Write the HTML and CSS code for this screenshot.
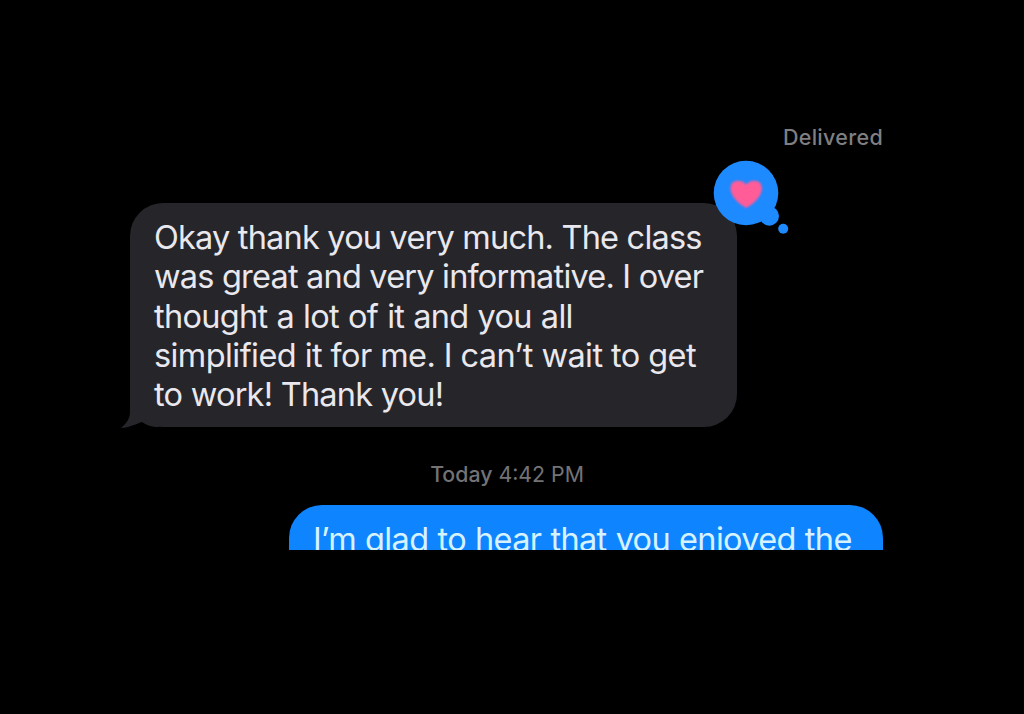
FILE: index.html
```
<!DOCTYPE html>
<html lang="en">
<head>
    <meta charset="UTF-8">
    <meta name="viewport" content="width=device-width, initial-scale=1.0">
    <title>Messages</title>
    <link rel="stylesheet" href="styles.css">
</head>
<body>
    <main class="chat">
        <div class="status">Delivered</div>

        <div class="bubble received">
            <svg class="tail" width="40" height="36" viewBox="0 0 40 36">
                <path d="M9 0V19C9 25 6 30 0 35C8 34.5 15 31 21 29C25 32 31 34 38 34V0Z" fill="#26252a"/>
            </svg>

            <p class="line line1">Okay thank you very much. The class</p>
            <p class="line line2">was great and very informative. I over</p>
            <p class="line line3">thought a lot of it and you all</p>
            <p class="line line4">simplified it for me. I can’t wait to get</p>
            <p class="line line5">to work! Thank you!</p>

            <svg class="reaction" width="78" height="78" viewBox="0 0 78 78">
                <g fill="#1d8aff">
                    <circle cx="34" cy="35" r="32.3"/>
                    <circle cx="57.3" cy="58" r="9.7"/>
                    <circle cx="71.2" cy="70.8" r="5"/>
                </g>
                <path class="heart" d="M34.2 50C27 46 18.5 38.5 18.5 30.5C18.5 25.5 21.5 22.8 26 22.8C29.5 22.8 32.5 24.3 34.2 26.5C35.9 24.3 38.9 22.8 42.4 22.8C46.9 22.8 49.9 25.5 49.9 30.5C49.9 38.5 41.4 46 34.2 50Z" fill="#ff5c98"/>
            </svg>
        </div>

        <div class="time"><b>Today</b> 4:42 PM</div>

        <div class="bubble sent">
            <p class="line line6">I’m glad to hear that you enjoyed the</p>
        </div>
    </main>
</body>
</html>
```
FILE: styles.css
```
* {
    box-sizing: border-box;
}
body {
    margin: 0;
    background-color: #000;
    font-family: Inter, "Liberation Sans", sans-serif;
}
.chat {
    display: flex;
    flex-direction: column;
    width: 883px;
    height: 550px;
    padding: 125px 0 0 130px;
    overflow: hidden;
}
.status, .bubble, .time {
    flex-shrink: 0;
}
.status {
    align-self: flex-end;
    height: 78px;
    color: #7f7f82;
    font-size: 21.5px;
    font-weight: 500;
    line-height: 25px;
    letter-spacing: 0.3px;
}
.bubble {
    position: relative;
    padding: 15px 24px;
    border-radius: 33px;
    font-size: 32.5px;
}
.received {
    width: 607px;
    height: 224px;
    background-color: #26252a;
    color: #e9e8ee;
}
.sent {
    align-self: flex-end;
    width: 594px;
    height: 90px;
    background-color: #0e84ff;
    color: #d5f2ff;
}
.line {
    position: relative;
    margin: 0;
    line-height: 39.3px;
    white-space: nowrap;
}
/* tracking per line keeps the text at its set width */
.line1, .line2 {
    letter-spacing: -0.8px;
}
.line3 {
    letter-spacing: -0.7px;
    word-spacing: 0.6px;
}
.line4 {
    letter-spacing: -0.58px;
}
.line5 {
    letter-spacing: -0.76px;
}
.line6 {
    letter-spacing: -0.66px;
    word-spacing: 0.6px;
}
.tail {
    position: absolute;
    left: -9px;
    bottom: -2px;
}
.reaction {
    position: absolute;
    left: 582px;
    top: -45px;
}
.heart {
    filter: blur(0.8px);
}
.time {
    width: 754px;
    height: 78px;
    padding-top: 34px;
    color: #737376;
    font-size: 21.3px;
    line-height: 26px;
    text-align: center;
}
.time b {
    font-weight: 500;
}
```
